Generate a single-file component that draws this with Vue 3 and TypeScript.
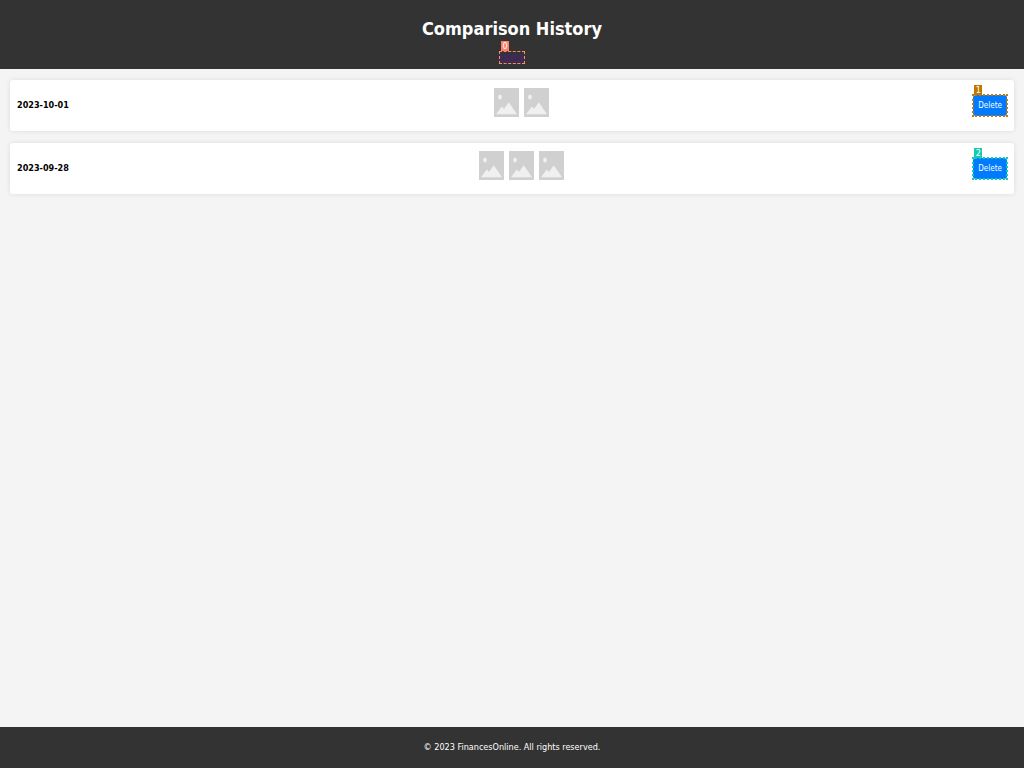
<script setup lang="ts">
interface Entry {
  date: string
  images: number
  mark: number
  tone: string
}

const entries: Entry[] = [
  { date: '2023-10-01', images: 2, mark: 1, tone: 'amber' },
  { date: '2023-09-28', images: 3, mark: 2, tone: 'teal' },
]
</script>

<template>
  <div class="page">
    <header class="header">
      <h1>Comparison History</h1>
      <nav>
        <span class="marked coral">
          <a href="#">Home</a>
          <span class="tag">0</span>
        </span>
      </nav>
    </header>

    <main>
      <article v-for="entry in entries" :key="entry.date" class="card">
        <strong class="date">{{ entry.date }}</strong>
        <div class="images">
          <svg v-for="n in entry.images" :key="n" viewBox="0 0 25 29" preserveAspectRatio="none" role="img" aria-label="Compared product">
            <rect width="25" height="29" fill="#d0d0d0" />
            <ellipse cx="6" cy="9" rx="1.8" ry="2.5" fill="#f0f0f0" />
            <path d="M2 26.3 L7.8 18.4 L10 21 L14.8 14.2 L23 26.3 Z" fill="#f0f0f0" />
          </svg>
        </div>
        <span class="marked thick" :class="entry.tone">
          <button type="button">Delete</button>
          <span class="tag">{{ entry.mark }}</span>
        </span>
      </article>
    </main>

    <footer class="footer">
      <p>© 2023 FinancesOnline. All rights reserved.</p>
    </footer>
  </div>
</template>

<style>
body {
  margin: 0;
}
</style>

<style scoped>
.page {
  display: flex;
  flex-direction: column;
  min-height: 100vh;
  background: #f4f4f4;
  font-family: "DejaVu Sans Condensed", "DejaVu Sans", sans-serif;
  font-size: 9px;
  line-height: 11px;
  color: #000;
}

.header {
  display: flex;
  flex-direction: column;
  align-items: center;
  padding: 18px 10px 6px;
  background: #333;
}

h1 {
  margin: 0 0 13px;
  color: #fff;
  font-size: 18px;
  line-height: 21px;
}

.marked {
  position: relative;
  display: block;
}

.marked::after {
  content: "";
  position: absolute;
  inset: -1px;
  border: 1px dashed;
  pointer-events: none;
}

.thick::after {
  border-width: 2px;
  border-style: dotted;
}

.marked a {
  display: block;
  color: #551a8b;
}

.tag {
  position: absolute;
  left: 1px;
  bottom: 100%;
  width: 8px;
  height: 10px;
  margin-bottom: 1px;
  color: #fff;
  font-size: 9px;
  line-height: 10px;
  text-align: center;
}

.thick .tag {
  margin-bottom: 0;
}

.coral::after {
  border-color: #ff8a70;
}

.coral .tag {
  background: #ff8066;
}

.amber::after {
  border-color: #c07a08;
}

.amber .tag {
  background: #c07800;
}

.teal::after {
  border-color: #10cdb0;
}

.teal .tag {
  background: #10cdb0;
}

main {
  display: flex;
  flex: 1;
  flex-direction: column;
  gap: 12px;
  padding: 11px 10px;
}

.card {
  display: flex;
  align-items: center;
  justify-content: space-between;
  padding: 7px 7px 7px 7px;
  border-radius: 3px;
  background: #fff;
  box-shadow: 0 0 5px rgba(0, 0, 0, 0.1);
}

.images {
  display: flex;
  gap: 5px;
  padding: 1px 0 7px;
}

.images svg {
  display: block;
  width: 25px;
  height: 29px;
}

button {
  display: block;
  padding: 5px;
  border: 0;
  border-radius: 3px;
  background: #007bff;
  color: #fff;
  font-family: inherit;
  font-size: 8px;
  line-height: 11px;
}

.footer {
  padding: 15px 10px;
  background: #333;
  color: #fff;
  text-align: center;
}

.footer p {
  margin: 0;
}
</style>
